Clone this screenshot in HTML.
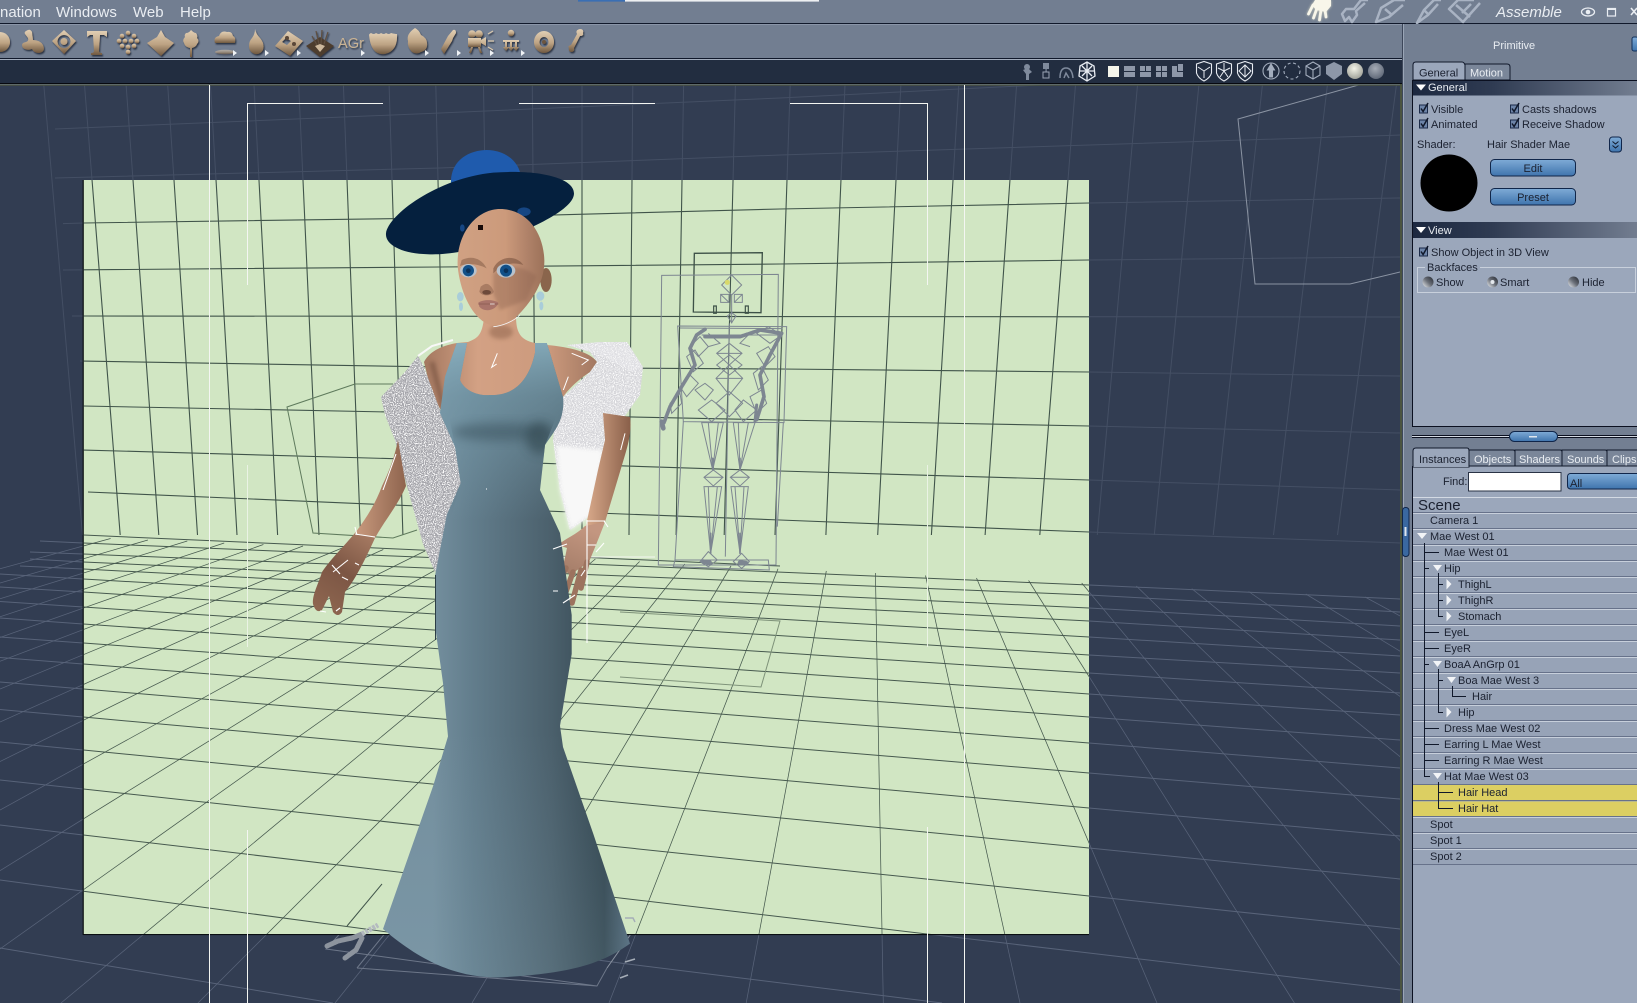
<!DOCTYPE html>
<html><head><meta charset="utf-8"><title>Assemble</title>
<style>
html,body{margin:0;padding:0;background:#727e91;width:1637px;height:1003px;overflow:hidden}
svg{display:block;position:absolute;left:0;top:0}
text{font-family:"Liberation Sans",Arial,sans-serif;font-size:11px;fill:#1b2130}
.m{font-size:15px;fill:#e9edf2}
.w{fill:#e9edf2;font-size:11px}
</style></head><body>
<svg width="1637" height="1003" viewBox="0 0 1637 1003" xmlns="http://www.w3.org/2000/svg">
<defs>
<clipPath id="vp"><rect x="0" y="85" width="1400" height="918"/></clipPath>
<clipPath id="pp"><rect x="83.5" y="180" width="1005.5" height="754"/></clipPath>
<linearGradient id="hd" x1="0" x2="1" y1="0" y2="0"><stop offset="0" stop-color="#1c2840"/><stop offset=".35" stop-color="#2f3b52"/><stop offset="1" stop-color="#727d90"/></linearGradient>
<linearGradient id="bt" x1="0" x2="0" y1="0" y2="1"><stop offset="0" stop-color="#7fabd6"/><stop offset="1" stop-color="#3f74ad"/></linearGradient>
<linearGradient id="bz" x1="0" x2="0" y1="0" y2="1"><stop offset="0" stop-color="#e2cfb4"/><stop offset=".55" stop-color="#bda383"/><stop offset="1" stop-color="#6f5840"/></linearGradient>
<linearGradient id="rd" x1="1" y1="0" x2="0" y2="1"><stop offset="0" stop-color="#23272f"/><stop offset=".5" stop-color="#6a6f78"/><stop offset="1" stop-color="#eef1f4"/></linearGradient>
<radialGradient id="sp" cx=".45" cy=".35" r=".7"><stop offset="0" stop-color="#f4f4e8"/><stop offset="1" stop-color="#9a9c94"/></radialGradient>
<radialGradient id="sp2" cx=".45" cy=".35" r=".7"><stop offset="0" stop-color="#a5abb5"/><stop offset="1" stop-color="#5b6474"/></radialGradient>
<linearGradient id="dr" gradientUnits="userSpaceOnUse" x1="433" x2="630" y1="0" y2="0"><stop offset="0" stop-color="#748f9e"/><stop offset=".2" stop-color="#627d8c"/><stop offset=".6" stop-color="#4b606c"/><stop offset=".87" stop-color="#334650"/><stop offset="1" stop-color="#52697a"/></linearGradient>
<linearGradient id="drTop" gradientUnits="userSpaceOnUse" x1="0" x2="0" y1="343" y2="520"><stop offset="0" stop-color="#8cb4c4" stop-opacity=".85"/><stop offset=".3" stop-color="#7da3b3" stop-opacity=".55"/><stop offset="1" stop-color="#7da3b3" stop-opacity="0"/></linearGradient>
<linearGradient id="drBot" gradientUnits="userSpaceOnUse" x1="0" x2="0" y1="730" y2="980"><stop offset="0" stop-color="#9cbccb" stop-opacity="0"/><stop offset="1" stop-color="#9cbccb" stop-opacity=".16"/></linearGradient>
<linearGradient id="ch" gradientUnits="userSpaceOnUse" x1="425" x2="600" y1="0" y2="0"><stop offset="0" stop-color="#a47860"/><stop offset=".3" stop-color="#d3a184"/><stop offset=".7" stop-color="#cc9a7d"/><stop offset="1" stop-color="#a07660"/></linearGradient>
<linearGradient id="armL" gradientUnits="userSpaceOnUse" x1="355" x2="410" y1="0" y2="0"><stop offset="0" stop-color="#c99a7e"/><stop offset="1" stop-color="#8a604a"/></linearGradient>
<linearGradient id="armR" gradientUnits="userSpaceOnUse" x1="590" x2="630" y1="0" y2="0"><stop offset="0" stop-color="#d2a385"/><stop offset="1" stop-color="#8a604a"/></linearGradient>
<linearGradient id="handL" gradientUnits="userSpaceOnUse" x1="370" y1="535" x2="320" y2="610"><stop offset="0" stop-color="#a67a62"/><stop offset=".5" stop-color="#7c5644"/><stop offset="1" stop-color="#8e6650"/></linearGradient>
<linearGradient id="handR" gradientUnits="userSpaceOnUse" x1="590" y1="530" x2="560" y2="600"><stop offset="0" stop-color="#c39680"/><stop offset="1" stop-color="#94705c"/></linearGradient>
<linearGradient id="sk2" gradientUnits="userSpaceOnUse" x1="323" x2="583" y1="0" y2="0"><stop offset="0" stop-color="#d0a183"/><stop offset=".55" stop-color="#cc9a7b"/><stop offset=".8" stop-color="#b08269"/><stop offset="1" stop-color="#9c7259"/></linearGradient>
<filter id="bl" x="-60%" y="-80%" width="220%" height="260%"><feGaussianBlur stdDeviation="8"/></filter>
<filter id="bl1" x="-50%" y="-50%" width="200%" height="200%"><feGaussianBlur stdDeviation="5"/></filter>
<filter id="bl2" x="-50%" y="-50%" width="200%" height="200%"><feGaussianBlur stdDeviation="2.2"/></filter>
<filter id="sd" x="-30%" y="-30%" width="170%" height="170%"><feDropShadow dx="1" dy="1.5" stdDeviation=".9" flood-color="#1a2030" flood-opacity=".8"/></filter>
<filter id="glow" x="-30%" y="-30%" width="170%" height="170%"><feDropShadow dx="0" dy="0" stdDeviation="1.4" flood-color="#fdf9d8" flood-opacity=".7"/></filter>
<filter id="spk" x="0" y="0" width="1" height="1"><feTurbulence type="fractalNoise" baseFrequency=".9" numOctaves="2" seed="4"/><feColorMatrix type="matrix" values="0 0 0 0 .98 0 0 0 0 .98 0 0 0 0 .98 6 0 0 0 -2.9"/><feComposite in2="SourceAlpha" operator="in" result="n"/><feMerge><feMergeNode in="SourceGraphic"/><feMergeNode in="n"/></feMerge></filter>
<g id="gw" fill="none">
<path d="M43.8 85L82.5 535M84.5 85L120.2 535M126.1 85L158.8 535M167.7 85L197.5 535M210.4 85L237 535M254 85L277.6 535M298.7 85L319 535M343.4 85L360.5 535M389.1 85L402.9 535M435.8 85L446.2 535M483.5 85L490.5 535M532.3 85L535.7 535M582 85L582 535M632.8 85L629 535M683.6 85L676.1 535M735.4 85L724.2 535M790.2 85L775 535M845 85L825.9 535M900.9 85L877.7 535M958.8 85L931.4 535M1016.6 85L985.1 535M1075.5 85L1039.8 535M1137.5 85L1097.3 535M1198.9 85L1154.3 535M1262.4 85L1213.2 535M1327.4 85L1273.5 535M1396.4 85L1337.5 535"/>
<path d="M55 129L440 113L780 98L1040 85M55 178L440 168L780 155L1400 135M63 223.6L83 223L440 218L780 209L1089 203L1400 198M63 270L440 267L780 264L1089 260L1400 257M72 316L1400 317M80 361L440 367L780 369L1089 372L1400 376M83 406L440 413L780 420L1089 426L1400 433M83 450L440 460L780 471L1089 480L1400 490M88 492L440 507L780 520L1089 532L1400 543"/>
</g>
<g id="gf" fill="none">
<path d="M0 880L343 926L620 963L942 1003M0 825L83 835L620 898L1089 953L1400 990M0 780L83 789L620 847L1089 896L1400 929M0 742L83 750L1089 848L1400 879M0 709.5L83 717L1089 808L1400 836M0 682L83 689L1089 773L1400 799M0 657.5L83 664L1089 743L1400 768M0 637L83 643L1089 717L1400 740M0 618L83 624L1089 694L1400 715M0 601.5L83 607L1089 673L1400 693M0 587L83 592L1089 655L1400 673M0 574L83 579L1089 637L1400 656M20 566L83 569L1089 621L1400 640M30 559L83 562L1089 608L1400 626M30 552L83 554L1089 595L1400 612M40 541L83 543L1089 585L1400 599M83 535L780 566M0 948L333 1003"/>
<path stroke-width=".75" d="M110.6 538.5L0 568.8M147.9 540L0 583M187.3 541L0 598.8M224.2 543L0 616.8M263.4 544.5L0 637.5M303 546L0 661.3M343.4 547.5L0 689M383.3 549.5L0 722M425 551L0 761.6M466.3 553L0 810M508.6 555L0 870.7M551.6 557L0 949M595.4 559L61 1003M639.6 561.5L198 1003M684.8 564L335 1003M731 566L472 1003M778 568.7L609 1003M826.3 571L746.2 1003M875.4 573L883.3 1003M925.5 575.5L1020 1003M976.5 578L1157 1003M1028.6 580.5L1294.4 1003M1081.7 583L1431.4 1003M1136.3 586L1568.5 1003M1191.8 588.7L1705.5 1003M1248.6 591.5L1842.6 1003M1305.8 594L1979.6 1003M1365 597L2116.6 1003"/>
</g>
<g id="shd" fill="none" stroke="#e8ecf2" stroke-width="1.1"><path d="M-7.5 -7L0 -9.5L7.5 -7L7.5 2Q6 7 0 10Q-6 7 -7.5 2Z"/></g>
<g id="cb"><rect x="0" y="1" width="8" height="8" fill="#6d84a8" stroke="#1b2a48" stroke-width="1"/><path d="M1.5 4.5L3.6 7.5L8.5 -1" fill="none" stroke="#10182a" stroke-width="1.5"/></g>
</defs>

<!-- chrome -->
<rect width="1637" height="1003" fill="#727e91"/>
<rect x="578" y="0" width="47" height="1.6" fill="#3a6fb4"/>
<rect x="625" y="0" width="194" height="1.6" fill="#eef0f2"/>
<rect x="0" y="23" width="1637" height="1" fill="#10182a"/>
<rect x="0" y="24" width="1637" height="1" fill="#8a95a8"/>
<rect x="0" y="58" width="1402" height="1" fill="#10182a"/>
<rect x="0" y="59" width="1402" height="1" fill="#a3adbd"/>
<rect x="0" y="60" width="1402" height="24" fill="#222d40"/>
<rect x="0" y="83" width="1402" height="1" fill="#07090f"/>
<rect x="1402" y="24" width="1" height="979" fill="#3d475a"/>
<rect x="1403" y="24" width="1" height="979" fill="#9aa5b6"/>

<text class="m" x="0" y="17">nation</text>
<text class="m" x="56" y="17">Windows</text>
<text class="m" x="133" y="17">Web</text>
<text class="m" x="180" y="17">Help</text>

<!-- mode tools -->
<g filter="url(#glow)" fill="#f8f6ea" stroke="#f8f6ea" stroke-linecap="round">
<path stroke="none" d="M1315 0L1331 0L1331 6L1326 12L1316 10L1312 5Z"/>
<path fill="none" stroke-width="2.8" d="M1313 5L1308.5 14M1317 8L1313.5 18M1321 10L1319.5 20M1325 10L1326 17"/>
</g>
<g fill="none" stroke="#a9b3c3" stroke-width="2.5" stroke-linejoin="round">
<path d="M1368 0L1361 0L1354 9L1346 9L1342 14L1345 21L1349 17L1352 22L1357 15L1356 11L1365 3"/>
<path d="M1405 0L1394 0L1381 8L1376 22L1389 17L1403 5M1385 9L1392 15"/>
<path d="M1441 0L1434 0L1424 10L1417 23L1428 15L1438 4M1424 10L1428 14"/>
<path d="M1474 0L1458 0L1449 9L1463 22L1480 3M1456 5L1470 17M1462 13L1471 4"/>
</g>
<text x="1496" y="17" style="font-size:15px;font-style:italic;fill:#e9edf2">Assemble</text>
<g fill="none" stroke="#e9edf2"><ellipse cx="1588" cy="12" rx="6.5" ry="4" stroke-width="1.3"/><circle cx="1588" cy="12" r="2.3" fill="#e9edf2" stroke="none"/><rect x="1607.5" y="8.5" width="8" height="7.5" stroke-width="1.2"/><path d="M1607 9h9" stroke-width="2"/><path d="M1631 8L1637 15M1637 8L1631 15" stroke-width="1.6"/></g>

<!-- toolbar icons -->
<g fill="url(#bz)" filter="url(#sd)">
<circle cx="0" cy="42" r="10"/>
<path d="M26 31q4 -3 6 1l1 8q7 0 10 5q3 7 -4 8q-5 0 -7 -4q-5 2 -9 -1q-3 -5 3 -6q3 -1 2 -4l-3 -4q-1 -2 1 -3z"/>
<path fill-rule="evenodd" d="M64 30L76 41L64 54L52 41ZM64 35a6.5 6.5 0 1 0 .01 0ZM64 38a3.5 3.5 0 1 1 -.01 0Z"/>
<path d="M87 31H107V37L104 35H100L99 51Q99 53 102 53V55H91V53Q94 53 94 51L93 35H90L87 37Z"/>
<g><circle cx="128" cy="33" r="2.3"/><circle cx="122" cy="36" r="2.3"/><circle cx="134" cy="36" r="2.3"/><circle cx="119" cy="41" r="2.3"/><circle cx="125" cy="41" r="2.3"/><circle cx="131" cy="41" r="2.3"/><circle cx="137" cy="41" r="2.3"/><circle cx="122" cy="46" r="2.3"/><circle cx="128" cy="47" r="2.3"/><circle cx="134" cy="46" r="2.3"/><circle cx="128" cy="52" r="2.3"/></g>
<path d="M161 30L165 37L174 43L161 56L147 43L157 37Z"/>
<path d="M191 30q3 3 5 3q2 3 1 5q3 3 0 6q-1 3 -5 4l0 9l-2 0l0 -9q-5 -1 -6 -5q-2 -3 1 -6q-1 -2 1 -4q3 0 5 -3z"/>
<path d="M215 43q-2 -6 4 -7q2 -6 8 -4q5 -1 6 4q3 1 2 7z"/>
<ellipse cx="225" cy="52" rx="10" ry="2.2" opacity=".55"/>
<path d="M255 29q1 5 5 9q5 6 3 12q-3 5 -8 4q-6 -2 -6 -8q0 -5 3 -8q3 -4 3 -9z"/>
<path d="M288 31L303 41L290 56L275 46ZM282 42l5 3l4 -4l-5 -3z" fill-rule="evenodd"/>
<circle cx="287" cy="38" r="2" fill="#5a4738"/><circle cx="294" cy="44" r="2" fill="#5a4738"/>
<path fill="#4d3c2e" d="M320 37L334 46L320 57L306 46Z"/>
<path fill="none" stroke="#5f4f40" stroke-width="1.2" d="M312 36l5 9M316 31l3 13M322 30l-1 14M328 32l-4 12"/>
<path fill="#cdb89c" d="M320 44l-5 2l5 6l5 -6z"/>
<text x="338" y="48" textLength="26" lengthAdjust="spacingAndGlyphs" style="font-size:15px;fill:#c9b394">AGr</text>
<path d="M371 33q3 2 5 0q3 2 5 0q3 2 5 0q3 2 5 0q4 1 6 1q1 17 -12 20q-14 2 -16 -19q0 -1 2 -2z"/>
<path d="M415 28q4 2 6 7q6 3 6 8q1 7 -6 9q-4 3 -9 0q-5 -5 -4 -11q-2 -7 7 -13z"/>
<path d="M453 30q3 -1 3 3l-3 5l-1 3l-8 13l-3 -5l7 -13z"/>
<rect x="468" y="38" width="13" height="9"/><circle cx="472" cy="34" r="3.8"/><circle cx="479" cy="34" r="3.8"/><path d="M481 40l5 -3v9l-5 -3zM471 47l-2 6h2l2 -6zM478 47l2 6h2l-2 -6z"/>
<path fill="none" stroke="#d8c7ad" stroke-width="1.2" d="M488 34l5 -3M488 41h6M488 47l5 3"/>
<circle cx="511" cy="33" r="3.2"/><path d="M503 40h16v2h-16zM505 42h2v5h2l-3 4l-3 -4h2zM510 42h2v5h2l-3 4l-3 -4h2zM515 42h2v5h2l-3 4l-3 -4h2z"/>
<path fill-rule="evenodd" d="M544 31a10 11 0 1 0 .01 0ZM544 37a4.5 5 0 1 1 -.01 0Z"/>
<circle cx="544" cy="42" r="2" fill="#6d5640"/>
<path d="M580 29q4 0 3 4q1 3 -3 3l-6 12q1 4 -3 4q-3 -1 -2 -4q-2 -2 2 -3l6 -11q-2 -4 3 -5z"/>
</g>
<g fill="#f0f3f6"><path d="M233 50v6l4 -3zM265 50v6l4 -3zM297 50v6l4 -3zM361 50v6l4 -3zM425 50v6l4 -3zM457 50v6l4 -3zM490 50v6l4 -3zM521 50v6l4 -3z"/></g>

<!-- view band icons -->
<g fill="#7f8a9c">
<circle cx="1027" cy="67" r="3"/><path d="M1023 70l5 -2l4 4l-3 2l0 6l-3 0l0 -6z"/>
<rect x="1043" y="63" width="6" height="6"/><rect x="1045.5" y="69" width="1.2" height="3"/><rect x="1043" y="72" width="6" height="6" fill="none" stroke="#9aa4b5"/>
<path fill="none" stroke="#7f8a9c" stroke-width="1.5" d="M1060 78q0 -10 6 -10q6 0 7 10M1064 78l2 -5l3 5"/>
</g>
<g fill="none" stroke="#e8ecf2" stroke-width="1.3"><path d="M1080 66L1087 62L1094 66L1095 76L1087 81L1079 76Z"/><path d="M1087 62V81M1080 71H1094M1082 66l10 10M1092 66l-10 10"/></g>
<rect x="1108" y="66" width="11" height="11" fill="#f4f4ea"/>
<g fill="#8d97a8"><rect x="1124" y="66" width="11" height="5"/><rect x="1124" y="72" width="11" height="5"/><rect x="1140" y="66" width="5" height="5"/><rect x="1146" y="66" width="5" height="5"/><rect x="1140" y="72" width="11" height="5"/><rect x="1156" y="66" width="5" height="5"/><rect x="1162" y="66" width="5" height="5"/><rect x="1156" y="72" width="5" height="5"/><rect x="1162" y="72" width="5" height="5"/><rect x="1172" y="66" width="5" height="11"/><rect x="1177" y="72" width="6" height="5"/><rect x="1178" y="64" width="5" height="7"/></g>
<use href="#shd" x="1204" y="71"/><use href="#shd" x="1224" y="71"/><use href="#shd" x="1245" y="71"/>
<g fill="none" stroke="#e8ecf2" stroke-width="1"><path d="M1204 71l-6 -4M1204 71l6 -4M1204 71v7M1224 71l-6 -3M1224 71l6 -3M1224 71v-8M1224 71l-4 6M1224 71l4 6M1239 71l6 -6l6 6l-6 6zM1245 65v12"/></g>
<g fill="none" stroke="#a3adbd" stroke-width="1.1"><circle cx="1271" cy="71" r="8"/><path d="M1271 64l-3.5 6h2v7h3v-7h2z" fill="#a3adbd"/><circle cx="1292" cy="71" r="8" stroke-dasharray="3 2.5"/><path d="M1306 66l7 -4l7 4v9l-7 4l-7 -4zM1306 66l7 4l7 -4M1313 70v9"/></g>
<path d="M1326 66l8 -4l8 4v8l-8 6l-8 -6z" fill="#8d97a8"/>
<circle cx="1355" cy="71" r="8" fill="url(#sp)"/>
<circle cx="1376" cy="71" r="8" fill="url(#sp2)"/>

<!-- viewport -->
<rect x="0" y="85" width="1400" height="918" fill="#323d52"/>
<g clip-path="url(#vp)">
<use href="#gw" stroke="#444f64" stroke-width="1"/>
<use href="#gf" stroke="#586379" stroke-width="1"/>
<path d="M1358.5 85L1238 119L1255 284L1350 284L1400 272" fill="none" stroke="#8b94a3"/>
<path d="M347 926L326 949L597 986L607 968M357 968L597 986M357 968L420 890" fill="none" stroke="#6d7789"/>
<path d="M607 968L640 921L622 917" fill="none" stroke="#8a92a0"/>
</g>
<rect x="0" y="84.5" width="1400" height="1.2" fill="#4b5440"/>
<rect x="1400" y="84" width="2" height="919" fill="#4b5440"/>
<rect x="83.5" y="180" width="1005.5" height="754.5" fill="#d1e6c3"/>
<rect x="82.6" y="180" width="1.2" height="755" fill="#0a0f12"/>
<rect x="83" y="934" width="1006" height="1.1" fill="#0a0f12"/>
<g clip-path="url(#pp)">
<use href="#gw" stroke="#40544a" stroke-width="1.1"/>
<use href="#gf" stroke="#46594e" stroke-width="1"/>
<path d="M355 384L287 407L313 533L393 538L417 530M355 384H393" fill="none" stroke="#5e7a5c"/>
<path d="M620 612L780 621L761 687L620 677" fill="none" stroke="#7e9279"/>
<path d="M382 884L347 926" fill="none" stroke="#40544a"/>
</g>

<!-- guides -->
<g stroke="#f4f6f2" stroke-width="1" fill="none" shape-rendering="crispEdges">
<path d="M209.5 85V1003M964.5 85V1003"/>
<path d="M247.5 285V103.5H383M519 103.5H655M790 103.5H927.5V285"/>
<path d="M247.5 830V1003M927.5 827V1003"/>
<path d="M519 557H655"/>
</g>
<path d="M247.5 465V647M927.5 465V647" stroke="#eaf3e4" stroke-width="1"/>

<!-- skeleton -->
<g transform="translate(640 240) scale(.3333)" fill="none" stroke="#7d8691" stroke-width="3">
<path stroke="#3d5147" stroke-width="4" d="M163 40L367 38L363 218L160 216Z"/>
<path d="M65 106L415 103L408 975L55 975ZM130 545L105 960H385L388 990L100 980L105 960M430 548L412 860"/>
<path d="M113 258L440 260L432 548L130 545ZM120 264L428 266"/>
<path d="M275 105L305 135L275 165L245 135Z"/>
<path d="M242 163h25v24h-25zM242 163l25 24M283 163h24v24h-24zM283 187l24 -24M275 165V250"/>
<path stroke="#3d5147" stroke-width="3.5" d="M221 198h8v22h-8zM316 198h9v22h-9z"/>
<path d="M262 228L275 218L288 228L275 248Z"/>
<path d="M268 250L256 950"/>
<path d="M230 340L268 310L306 340L268 375ZM230 340H306M230 375L268 345L306 375L268 405ZM228 415L268 375L308 415L268 465ZM228 415H308M228 490L268 455L308 490L268 530Z"/>
<path d="M185 285H420M205 280L240 310L205 320M330 280L300 310L330 320"/>
<path d="M150 320L180 290L205 320L175 350ZM140 350L165 330L190 370L160 395ZM120 440L150 405L175 430L140 470ZM90 490L120 460L125 490L95 520Z"/>
<path d="M350 280L385 260L425 285L390 310ZM350 340L385 320L405 350L375 380ZM340 400L365 380L385 420L355 450ZM330 470L365 450L380 490L350 520Z"/>
<path d="M175 510L215 480L255 510L215 545ZM285 510L310 480L350 510L310 545Z"/>
<path d="M165 450L195 430L220 450L195 480Z"/>
<path d="M185 548L218 690L250 548ZM205 548L218 690L235 548ZM280 548L300 690L345 548ZM295 548L300 690L325 548Z"/>
<path d="M192 712L220 690L249 712L220 738ZM192 712H249M271 712L300 690L328 712L300 738ZM271 712H328"/>
<path d="M192 740H245L212 940ZM205 740L212 940L232 740ZM273 740H325L300 940ZM285 740L300 940L312 740Z"/>
<path d="M180 965L205 935L232 960L205 980ZM280 965L305 940L328 965L305 985Z"/>
<g stroke-width="11" stroke-linejoin="round" stroke-linecap="round">
<path stroke-dasharray="9 3" d="M195 268L170 285L150 325L165 375L125 440L90 500L72 548"/>
<path stroke-dasharray="9 3" d="M195 290H300L360 270L425 280L390 345L360 405L372 470L350 540"/>
<path d="M218 655L220 690M300 655L300 690M212 880L212 940M300 880L300 940" stroke-width="5"/>
<path d="M190 965L210 968M300 968L320 970" stroke-width="14" stroke-dasharray="5 2"/>
<path d="M65 545L70 565" stroke-width="14"/>
<path d="M350 495L345 545" stroke-width="9"/>
</g>
</g>
<circle cx="727.3" cy="282.3" r="2.6" fill="#d8d86a"/>

<!-- hat back & brim -->
<g transform="translate(350 140) scale(.33333)">
<path d="M303 130C300 60 360 30 410 30C470 30 510 70 512 110Z" fill="#1f5bad"/>
<path d="M108 280C115 225 260 115 430 98C560 88 672 112 672 160C672 205 560 260 450 300C350 340 270 346 220 342C150 338 105 312 108 280Z" fill="#05203e"/>
<ellipse cx="522" cy="215" rx="20" ry="13" fill="#164683"/>
<ellipse cx="337" cy="264" rx="7" ry="11" fill="#164683"/>
</g>

<!-- neck + chest -->
<path d="M424 362C430 350 445 345 457 343L468 342C478 338 482 335 484 318L516 316C516 332 520 340 535 343L547 345C570 347 590 352 597 362L590 372C575 382 568 390 563 397L450 412L442 412L432 395Z" fill="url(#ch)"/>
<ellipse cx="501" cy="332" rx="12" ry="7" fill="#8b6049" opacity=".5" filter="url(#bl2)"/>
<path d="M432 362L444 410" stroke="#6e4c3a" stroke-width="5" opacity=".6" filter="url(#bl2)"/>

<!-- boa left -->
<path d="M381 397L405 372L418 356L424 367L440 410L456 420L475 500L435 572L423 544L407 486L395 440L385 415Z" fill="#a4a4aa" filter="url(#spk)"/>
<path d="M418 356L432 346L453 340" fill="none" stroke="#f8f8f8" stroke-width="2"/>
<!-- boa right -->
<path d="M597 362L590 372L563 397L556 410L553 440L560 490L570 530L587 518L600 470L610 435L622 420L640 395L643 367L627 342L600 342L567 345L590 352Z" fill="#d6d6da" filter="url(#spk)"/>
<path d="M567 345L600 342L627 342L643 367L632 372L600 355Z" fill="#f2f2f4" opacity=".35"/>
<path d="M556 445L604 450L592 515L570 530L560 490Z" fill="#f8f8f8" filter="url(#bl2)"/>

<!-- arms -->
<path d="M398 440C395 455 390 470 382 486C375 505 365 520 355 533L375 538C385 520 398 505 406 486L398 440Z" fill="url(#armL)"/>
<path d="M355 533C345 545 330 560 322 572C318 585 312 595 313 604Q316 614 322 610L329 596L333 612Q338 618 342 612L345 592C355 580 365 560 375 538Z" fill="url(#handL)"/>
<path d="M603 413L630 417C632 430 628 445 625 455L605 522L585 530L598 470L605 440Z" fill="url(#armR)"/>
<path d="M558 545C566 538 576 535 585 526L605 522C600 535 594 550 589 562L570 575L562 568C565 560 566 552 567 548Z" fill="url(#handR)"/>
<g stroke="#9c735e" stroke-width="5.5" stroke-linecap="round" fill="none"><path d="M566 568L555 590M573 572L563 600M581 570L572 603M587 562L581 588"/></g>

<!-- dress -->
<g>
<path d="M456.7 343L467 343L460 380C465 392 480 396 490 395C510 396 528 385 535 353L535 343L546.7 343L550 353L563 397C565 420 555 430 545 445L540 490L560 533L571.7 615L571.7 654L560 725.7L563 747L593 833L630 943.6C600 965 567 974 497 977.5C460 977 425 965 383 929L433 786.4L448 736.4L443 683L435 625.7L435 575.7L446.7 515L460.7 483L455 447L440 413L445 376.7Z" fill="url(#dr)"/>
<path d="M456.7 343L467 343L460 380C465 392 480 396 490 395C510 396 528 385 535 353L535 343L546.7 343L550 353L563 397C565 420 555 430 545 445L540 490L560 533H446.7L460.7 483L455 447L440 413L445 376.7Z" fill="url(#drTop)"/>
<path d="M383 929L433 786.4L448 736.4H560L563 747L593 833L630 943.6C600 965 567 974 497 977.5C460 977 425 965 383 929Z" fill="url(#drBot)"/>
<clipPath id="dc"><path d="M446 400H563L545 445L540 490H460L455 447Z"/></clipPath>
<g clip-path="url(#dc)"><ellipse cx="500" cy="432" rx="48" ry="9" fill="#3d5461" opacity=".55" filter="url(#bl1)"/>
<ellipse cx="540" cy="438" rx="14" ry="16" fill="#33474f" opacity=".6" filter="url(#bl1)"/></g>
<path d="M435.5 575L435.5 640" stroke="#2c3d46" stroke-width="1" fill="none"/>
</g>

<!-- head -->
<g transform="translate(350 140) scale(.33333)">
<ellipse cx="588" cy="420" rx="17" ry="36" fill="#8a654c"/>
<path d="M450 207C525 207 580 270 583 360C585 430 540 490 500 530C470 555 430 565 405 548C360 520 330 450 323 380C318 280 380 207 450 207Z" fill="url(#sk2)"/>
<path d="M430 400C470 370 530 380 560 410L530 480L450 510L430 460Z" fill="#8d6350" opacity=".4" filter="url(#bl1)"/>
<path d="M335 360C365 345 395 355 410 385C385 372 355 368 330 378Z" fill="#8a624b" opacity=".6"/>
<path d="M430 385C450 345 500 345 520 375C490 365 460 370 430 400Z" fill="#7a5440" opacity=".6"/>
<ellipse cx="355" cy="392" rx="25" ry="20" fill="#b8c2cc"/>
<circle cx="355" cy="392" r="17" fill="#125088"/><circle cx="355" cy="392" r="7" fill="#0c3158"/>
<ellipse cx="468" cy="392" rx="28" ry="21" fill="#b8c2cc"/>
<circle cx="468" cy="392" r="18" fill="#125088"/><circle cx="468" cy="392" r="7" fill="#0c3158"/>
<path d="M392 440C410 425 420 430 432 455C425 470 395 470 388 455Z" fill="#a97c63"/>
<ellipse cx="410" cy="457" rx="13" ry="7" fill="#6d4a3a"/>
<path d="M385 488C400 478 430 478 445 488C440 510 405 520 388 500Z" fill="#a9746a"/>
<path d="M385 492H445" stroke="#8a5a50" stroke-width="2.5"/>
<rect x="384" y="255" width="15" height="15" fill="#170a08"/>
<path d="M420 492h14M430 560C455 558 490 545 510 525" stroke="#f4f4f4" stroke-width="2.5" fill="none"/>
<g fill="#a9cdd9"><ellipse cx="331" cy="470" rx="10" ry="14"/><ellipse cx="333" cy="500" rx="6" ry="13"/><ellipse cx="571" cy="468" rx="12" ry="14"/><ellipse cx="574" cy="498" rx="6" ry="13"/></g>
<g fill="none" stroke="#fff" stroke-width="3"><path d="M442 640L425 682L440 672M665 640L715 660L695 675M640 750L655 710M825 880L812 930"/></g>
</g>

<!-- selection marks -->
<g fill="none" stroke="#fff" stroke-width="1.1">
<path d="M396 454L383 490M355 534L375 537M355 527L357 535M333 572L348 560M332 565L340 574M355 563L359 565M342 577L348 580M320 611L326 612M336 611L340 608"/>
<path d="M587 520V643M587 521H605M604 521L608 527M604 543L596 552M587 545H596M553 549L567 544M553 591H558M563 603L575 595M585 570L581 576"/>
<path d="M486 489h1"/>
</g>
<path d="M327 946L338 941L352 938L362 934M345 958L356 950L362 938" fill="none" stroke="#8d949e" stroke-width="5" stroke-linecap="round" stroke-dasharray="3 1"/>
<path d="M362 934L378 925" fill="none" stroke="#b4bac0" stroke-width="5" stroke-dasharray="3 1"/>
<path d="M625 918h8l2 4M628 975l-8 3M625 962l10 -3" fill="none" stroke="#a6aeb8" stroke-width="1.5"/>

<!-- right side panel -->
<rect x="1404" y="24" width="233" height="979" fill="#737f92"/>
<text class="w" x="1493" y="49">Primitive</text>
<rect x="1632" y="37" width="6" height="14" rx="2" fill="url(#bt)" stroke="#12305a"/>

<path d="M1413 80V65Q1413 62 1416 62H1462Q1464 62 1465 65V80Z" fill="#9ba7bb" stroke="#10182a"/>
<path d="M1465 80V64H1507Q1510 64 1510 67V80Z" fill="#7a8699" stroke="#10182a"/>
<text x="1419" y="76.5" style="font-size:11px">General</text>
<text class="w" x="1470" y="76.5">Motion</text>

<rect x="1413" y="80" width="224" height="346" fill="#9ba7bb"/>
<rect x="1412" y="80" width="1" height="347" fill="#0b1020"/>
<rect x="1412" y="80" width="225" height="1" fill="#0b1020"/>
<rect x="1413" y="81" width="224" height="14.5" fill="url(#hd)"/>
<path d="M1416 84.5h10l-5 6z" fill="#fff"/>
<text class="w" x="1428" y="91">General</text>

<use href="#cb" x="1419.5" y="104"/>
<text x="1431" y="113">Visible</text>
<use href="#cb" x="1510.5" y="104"/>
<text x="1522" y="113">Casts shadows</text>
<use href="#cb" x="1419.5" y="119"/>
<text x="1431" y="128">Animated</text>
<use href="#cb" x="1510.5" y="119"/>
<text x="1522" y="128">Receive Shadow</text>
<text x="1417" y="148">Shader:</text>
<text x="1487" y="148">Hair Shader Mae</text>
<rect x="1609.5" y="137" width="12" height="15" rx="3" fill="url(#bt)" stroke="#10264a"/>
<path d="M1612.5 141.5l3 2.5l3 -2.5M1612.5 145.5l3 2.5l3 -2.5" fill="none" stroke="#10182a" stroke-width="1"/>
<circle cx="1449" cy="183" r="28.5" fill="#000"/>
<rect x="1490.5" y="159.5" width="85" height="16.5" rx="4" fill="url(#bt)" stroke="#10264a"/>
<rect x="1490.5" y="188.5" width="85" height="16.5" rx="4" fill="url(#bt)" stroke="#10264a"/>
<text x="1533" y="172" text-anchor="middle">Edit</text>
<text x="1533" y="201" text-anchor="middle">Preset</text>

<rect x="1413" y="222" width="224" height="16" fill="url(#hd)"/>
<path d="M1416 227h10l-5 6z" fill="#fff"/>
<text class="w" x="1428" y="234">View</text>
<use href="#cb" x="1419.5" y="247"/>
<text x="1431" y="256">Show Object in 3D View</text>
<rect x="1417.5" y="267.5" width="218" height="25" fill="none" stroke="#c8d0dc"/>
<rect x="1425" y="262" width="55" height="10" fill="#9ba7bb"/>
<text x="1427" y="271">Backfaces</text>
<circle cx="1428" cy="282" r="5.5" fill="url(#rd)"/><text x="1436" y="286">Show</text>
<circle cx="1492.5" cy="282" r="5.5" fill="url(#rd)"/><circle cx="1492.5" cy="282" r="2" fill="#e4e8ec"/><text x="1500" y="286">Smart</text>
<circle cx="1573.5" cy="282" r="5.5" fill="url(#rd)"/><text x="1582" y="286">Hide</text>

<rect x="1412" y="426" width="225" height="1" fill="#0b1020"/>
<rect x="1412" y="435" width="225" height="1" fill="#0b1020"/>
<rect x="1412" y="436" width="225" height="1" fill="#d4dae3"/>
<rect x="1412" y="437" width="225" height="1" fill="#0b1020"/>
<rect x="1509.5" y="431.5" width="48" height="10" rx="5" fill="url(#bt)" stroke="#10264a"/>
<rect x="1529" y="436" width="8" height="1.5" fill="#dfe6ee"/>

<!-- instance tabs -->
<rect x="1413" y="466" width="224" height="537" fill="#9ba7bb"/>
<rect x="1412" y="466" width="1" height="537" fill="#0b1020"/>
<path d="M1469 466V450H1513Q1515 450 1515 452V466Z" fill="#7a8699" stroke="#10182a"/>
<path d="M1515 466V450H1560Q1562 450 1562 452V466Z" fill="#7a8699" stroke="#10182a"/>
<path d="M1562 466V450H1605Q1607 450 1607 452V466Z" fill="#7a8699" stroke="#10182a"/>
<path d="M1607 466V450H1640V466Z" fill="#7a8699" stroke="#10182a"/>
<path d="M1413 467V451Q1413 448 1416 448H1467Q1469 448 1469 451V467Z" fill="#9ba7bb" stroke="#10182a"/>
<rect x="1413.5" y="464" width="55" height="3" fill="#9ba7bb"/>
<text x="1419" y="463" style="font-size:11px">Instances</text>
<text class="w" x="1474" y="463">Objects</text>
<text class="w" x="1519" y="463">Shaders</text>
<text class="w" x="1567" y="463">Sounds</text>
<text class="w" x="1612" y="463">Clips</text>
<text x="1443" y="485">Find:</text>
<rect x="1468.5" y="472.5" width="92.5" height="18.5" fill="#fff" stroke="#2a3346"/>
<rect x="1567.5" y="473.5" width="75" height="15.5" rx="3" fill="url(#bt)" stroke="#10264a"/>
<text x="1570" y="487" style="font-size:11px">All</text>

<rect x="1402.5" y="507.5" width="6.5" height="49" rx="3" fill="#3a68a0" stroke="#10264a"/>
<rect x="1404.5" y="527" width="2" height="9" fill="#dfe6ee"/>

<!-- rows -->
<rect x="1413" y="497" width="224" height="1" fill="#d3dae4"/>
<g>
<rect x="1413" y="513" width="224" height="351" fill="#97a3b7"/>
<rect x="1413" y="785" width="224" height="15.5" fill="#dccf62"/>
<rect x="1413" y="801.5" width="224" height="15" fill="#dccf62"/>
<path stroke="#67728a" stroke-width="1" d="M1413 512.5H1637M1413 528.5H1637M1413 544.5H1637M1413 560.5H1637M1413 576.5H1637M1413 592.5H1637M1413 608.5H1637M1413 624.5H1637M1413 640.5H1637M1413 656.5H1637M1413 672.5H1637M1413 688.5H1637M1413 704.5H1637M1413 720.5H1637M1413 736.5H1637M1413 752.5H1637M1413 768.5H1637M1413 784.5H1637M1413 800.5H1637M1413 816.5H1637M1413 832.5H1637M1413 848.5H1637M1413 864.5H1637"/>
<path stroke="#c7cfdb" stroke-width="1" d="M1413 513.5H1637M1413 529.5H1637M1413 545.5H1637M1413 561.5H1637M1413 577.5H1637M1413 593.5H1637M1413 609.5H1637M1413 625.5H1637M1413 641.5H1637M1413 657.5H1637M1413 673.5H1637M1413 689.5H1637M1413 705.5H1637M1413 721.5H1637M1413 737.5H1637M1413 753.5H1637M1413 769.5H1637M1413 817.5H1637M1413 833.5H1637M1413 849.5H1637"/>
</g>
<text x="1418" y="510" style="font-size:15px">Scene</text>
<text x="1430" y="524">Camera 1</text>
<text x="1430" y="540">Mae West 01</text>
<text x="1444" y="556">Mae West 01</text>
<text x="1444" y="572">Hip</text>
<text x="1458" y="588">ThighL</text>
<text x="1458" y="604">ThighR</text>
<text x="1458" y="620">Stomach</text>
<text x="1444" y="636">EyeL</text>
<text x="1444" y="652">EyeR</text>
<text x="1444" y="668">BoaA AnGrp 01</text>
<text x="1458" y="684">Boa Mae West 3</text>
<text x="1472" y="700">Hair</text>
<text x="1458" y="716">Hip</text>
<text x="1444" y="732">Dress Mae West 02</text>
<text x="1444" y="748">Earring L Mae West</text>
<text x="1444" y="764">Earring R Mae West</text>
<text x="1444" y="780">Hat Mae West 03</text>
<text x="1458" y="796">Hair Head</text>
<text x="1458" y="812">Hair Hat</text>
<text x="1430" y="828">Spot</text>
<text x="1430" y="844">Spot 1</text>
<text x="1430" y="860">Spot 2</text>

<g stroke="#10182a" stroke-width="1" fill="none" shape-rendering="crispEdges">
<path d="M1424.5 543V776.5H1430"/>
<path d="M1425 552.5H1439M1425 568.5H1429M1425 632.5H1439M1425 648.5H1439M1425 664.5H1429M1425 728.5H1439M1425 744.5H1439M1425 760.5H1439"/>
<path d="M1438.5 573V616.5H1443M1439 584.5H1443M1439 600.5H1443"/>
<path d="M1438.5 669V712.5H1443M1439 680.5H1443"/>
<path d="M1452.5 686V696.5H1466"/>
<path d="M1438.5 782V808.5H1453M1439 792.5H1453"/>
</g>
<g fill="#f2f4f7">
<path d="M1417 533h10l-5 6z"/>
<path d="M1433 565h9l-4.5 6zM1433 661h9l-4.5 6zM1433 773h9l-4.5 6z"/>
<path d="M1447 677h9l-4.5 6z"/>
<path d="M1446.5 579l5 5l-5 5.5zM1446.5 595l5 5l-5 5.5zM1446.5 611l5 5l-5 5.5zM1446.5 707l5 5l-5 5.5z"/>
</g>
</svg>
</body></html>
